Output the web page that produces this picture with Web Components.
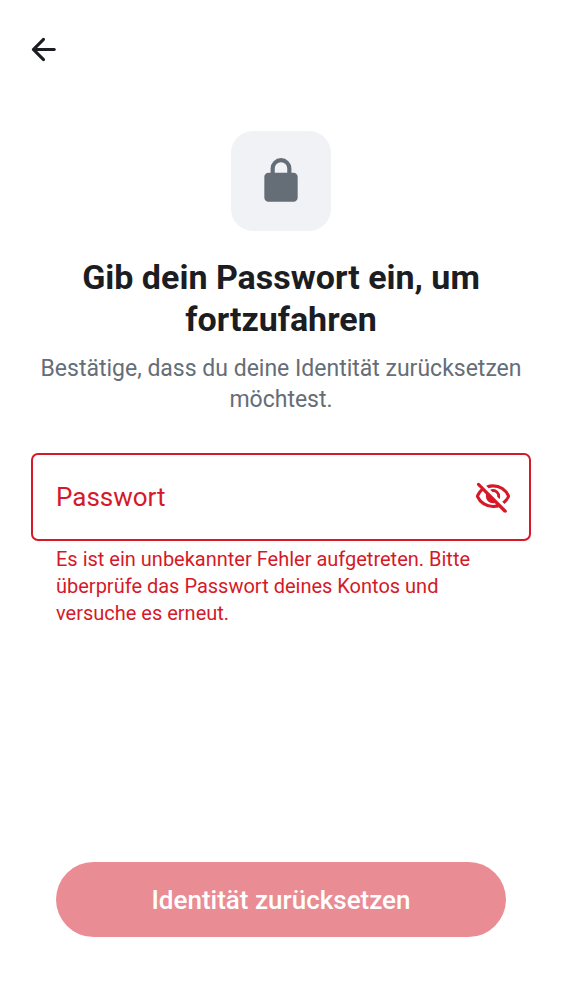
<!DOCTYPE html>
<html lang="de">
<head>
<meta charset="utf-8">
<meta name="viewport" content="width=device-width, initial-scale=1">
<title>Identität zurücksetzen</title>
<style>
html, body { margin: 0; min-height: 100%; background: #fff; }
body { font-family: Roboto, sans-serif; color: #1b1d22; }
</style>
</head>
<body>
<reset-screen>
  <back-button slot="nav"></back-button>
  <page-header>
    Gib dein Passwort ein, um fortzufahren
    <span slot="subtitle">Bestätige, dass du deine Identität zurücksetzen möchtest.</span>
  </page-header>
  <password-field>
    <span slot="label">Passwort</span>
    Es ist ein unbekannter Fehler aufgetreten. Bitte überprüfe das Passwort deines Kontos und versuche es erneut.
  </password-field>
  <primary-button slot="actions">Identität zurücksetzen</primary-button>
</reset-screen>
<script>
function define(name, html, setup) {
  customElements.define(name, class extends HTMLElement {
    constructor() {
      super();
      this.attachShadow({ mode: "open" }).innerHTML = html;
      if (setup) setup(this.shadowRoot);
    }
  });
}

define("reset-screen", `
<style>
:host { display: flex; flex-direction: column; box-sizing: border-box; min-height: 100vh; padding: 31px 31px 63px; }
main { display: flex; flex-direction: column; gap: 38px; margin-top: 63px; flex: 1; }
footer { padding: 24px 25px 0; }
</style>
<nav><slot name="nav"></slot></nav>
<main><slot></slot></main>
<footer><slot name="actions"></slot></footer>`);

define("back-button", `
<style>
:host { display: block; }
button { display: block; border: 0; padding: 0; background: none; color: #1b1d22; cursor: pointer; }
svg { display: block; width: 37px; height: 37px; margin-left: -6px; }
</style>
<button type="button" aria-label="Zurück">
<svg viewBox="0 0 24 24" fill="currentColor"><path d="m7.83 13 4.9 4.9q.3.3.29.7-.02.4-.32.7-.3.28-.7.29-.4 0-.7-.29l-6.6-6.6a.9.9 0 0 1-.21-.32 1.1 1.1 0 0 1 0-.76.9.9 0 0 1 .21-.32l6.6-6.6a1 1 0 0 1 .69-.28q.41 0 .71.28.3.3.3.71 0 .42-.3.71L7.83 11H19q.43 0 .71.29.29.28.29.71 0 .42-.29.71A.97.97 0 0 1 19 13z"/></svg>
</button>`);

define("page-header", `
<style>
:host { display: flex; flex-direction: column; align-items: center; text-align: center; }
.tile { display: grid; place-items: center; width: 100px; height: 100px; border-radius: 22px; background: #f0f2f5; color: #656d77; }
svg { width: 50px; height: 50px; }
h1 { margin: 25px 16px 0; font-size: 34px; line-height: 42px; font-weight: 700; }
p { margin: 13px 0 0; font-size: 23px; line-height: 31px; color: #656d77; }
</style>
<div class="tile"><svg viewBox="0 0 24 24" fill="currentColor" aria-hidden="true"><path d="M6 22q-.82 0-1.41-.59A1.93 1.93 0 0 1 4 20V10q0-.82.59-1.41A1.93 1.93 0 0 1 6 8h1V6q0-2.07 1.46-3.54Q9.93 1 12 1t3.54 1.46T17 6v2h1q.82 0 1.41.59Q20 9.18 20 10v10q0 .82-.59 1.41A1.93 1.93 0 0 1 18 22zM9 8h6V6q0-1.25-.88-2.13A2.9 2.9 0 0 0 12 3q-1.25 0-2.12.88A2.9 2.9 0 0 0 9 6z"/></svg></div>
<h1><slot></slot></h1>
<p><slot name="subtitle"></slot></p>`);

define("password-field", `
<style>
:host { display: block; color: #d51928; }
.box { display: flex; align-items: center; box-sizing: border-box; min-height: 88px; border: 2px solid #d51928; border-radius: 7px; padding: 0 17px 0 23px; }
.entry { display: grid; flex: 1; min-width: 0; align-items: center; font-size: 26px; line-height: 38px; }
label, input { grid-area: 1 / 1; }
input { width: 100%; box-sizing: border-box; height: 60px; padding: 0; border: 0; outline: 0; background: none; font: inherit; color: inherit; }
label { pointer-events: none; visibility: hidden; }
input:placeholder-shown + label { visibility: visible; }
button { border: 0; padding: 0; background: none; color: inherit; cursor: pointer; }
svg { display: block; width: 38px; height: 38px; }
p { margin: 5px 25px 0; font-size: 20px; line-height: 27px; }
</style>
<div class="box">
<div class="entry">
<input id="password" type="password" placeholder=" " aria-describedby="error" aria-invalid="true">
<label for="password"><slot name="label"></slot></label>
</div>
<button type="button" aria-label="Passwort anzeigen"><svg viewBox="0 0 24 24" fill="currentColor"><path d="m16.1 13.3-1.45-1.45q.22-1.18-.68-2.2-.9-1.02-2.32-.8L10.2 7.4q.42-.2.86-.3.43-.1.94-.1 1.88 0 3.19 1.31Q16.5 9.63 16.5 11.5q0 .5-.1.94t-.3.86m3.2 3.15-1.45-1.4a11 11 0 0 0 1.69-1.59q.74-.87 1.26-1.96a9.8 9.8 0 0 0-3.59-4.01A9.6 9.6 0 0 0 12 6q-.73 0-1.43.1-.7.1-1.37.3L7.65 4.85a11.1 11.1 0 0 1 4.35-.85q3.57 0 6.43 1.89 2.84 1.88 4.22 5.03.08.13.1.28a2 2 0 0 1 0 .6 1.3 1.3 0 0 1-.1.25 11.7 11.7 0 0 1-3.35 4.4m-.2 5.45-3.5-3.45q-.87.28-1.76.41A13 13 0 0 1 12 19q-3.57 0-6.42-1.89a11.4 11.4 0 0 1-4.23-5.03 1 1 0 0 1-.12-.26 1.3 1.3 0 0 1 0-.61q.03-.15.12-.28.5-1.15 1.23-2.18A11 11 0 0 1 4.25 6.85L2.1 4.7q-.27-.27-.27-.69 0-.4.29-.71.27-.27.7-.27.42 0 .7.27l17 17q.27.27.29.69 0 .4-.29.71-.27.27-.7.27a1 1 0 0 1-.7-.27M5.55 8.25a9.5 9.5 0 0 0-2.35 3.25 9.8 9.8 0 0 0 3.59 4.01A9.6 9.6 0 0 0 12 17q.5 0 .97-.06l.98-.14-.9-.95q-.27.07-.52.11T12 16q-1.88 0-3.19-1.31Q7.5 13.38 7.5 11.5q0-.28.04-.52.04-.26.11-.53z"/></svg></button>
</div>
<p id="error" role="alert"><slot></slot></p>`, root => {
  const input = root.querySelector("input");
  root.querySelector("button").addEventListener("click", () => {
    input.type = input.type === "password" ? "text" : "password";
  });
});

define("primary-button", `
<style>
:host { display: block; }
button { display: block; width: 100%; min-height: 75px; border: 0; border-radius: 38px; padding: 0; background: #ea8c94; color: #fff; font: 500 26px/38px Roboto, sans-serif; }
</style>
<button type="button"><slot></slot></button>`);
</script>
</body>
</html>
